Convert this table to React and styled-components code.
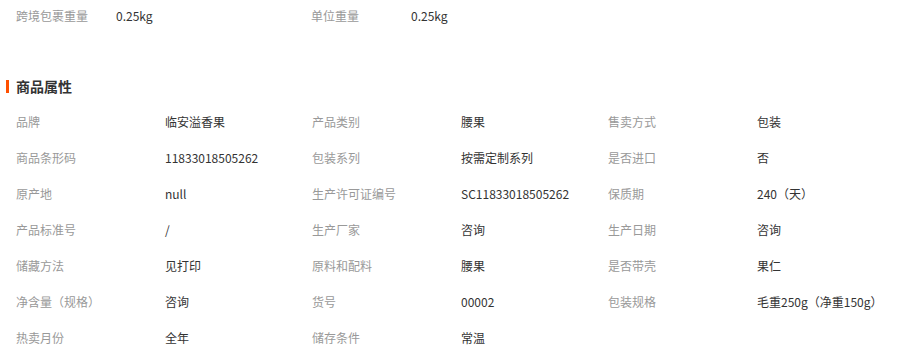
import React from 'react';
import styled, { createGlobalStyle } from 'styled-components';

const GlobalStyle = createGlobalStyle`
    body {
        margin: 0;
        background: #fff;
        font-family: "Noto Sans CJK SC", "Liberation Sans", sans-serif;
        font-size: 12px;
        color: #333;
    }
`;

const Wrapper = styled.div`
    width: 924px;
    padding-left: 16px;
    box-sizing: border-box;
`;

const TopRow = styled.div`
    display: grid;
    grid-template-columns: 100px 195px 100px 195px;
    height: 30px;
    align-items: center;
`;

const Heading = styled.h3`
    position: relative;
    margin: 39px 0 0;
    height: 34px;
    line-height: 34px;
    font-size: 14px;
    font-weight: bold;
    color: #333;

    &::before {
        content: '';
        position: absolute;
        left: -10px;
        top: 11px;
        width: 3px;
        height: 13px;
        background: #ff5000;
    }
`;

const Table = styled.div`
    display: grid;
    grid-template-columns: 149px 147px 149px 147px 149px 147px;
    grid-auto-rows: 36px;
    align-items: center;
`;

const Label = styled.span`
    color: #999;
    white-space: nowrap;
`;

const Value = styled.span`
    color: #333;
    white-space: nowrap;
`;

const rows = [
    ['品牌', '临安溢香果', '产品类别', '腰果', '售卖方式', '包装'],
    ['商品条形码', '11833018505262', '包装系列', '按需定制系列', '是否进口', '否'],
    ['原产地', 'null', '生产许可证编号', 'SC11833018505262', '保质期', '240（天）'],
    ['产品标准号', '/', '生产厂家', '咨询', '生产日期', '咨询'],
    ['储藏方法', '见打印', '原料和配料', '腰果', '是否带壳', '果仁'],
    ['净含量（规格）', '咨询', '货号', '00002', '包装规格', '毛重250g（净重150g）'],
    ['热卖月份', '全年', '储存条件', '常温'],
];

const App = () => (
    <Wrapper>
        <GlobalStyle />
        <TopRow>
            <Label>跨境包裹重量</Label>
            <Value>0.25kg</Value>
            <Label>单位重量</Label>
            <Value>0.25kg</Value>
        </TopRow>
        <Heading>商品属性</Heading>
        <Table>
            {rows.map((row, i) =>
                row.map((text, j) =>
                    j % 2 === 0
                        ? <Label key={`${i}-${j}`}>{text}</Label>
                        : <Value key={`${i}-${j}`}>{text}</Value>
                )
            )}
        </Table>
    </Wrapper>
);

export default App;
